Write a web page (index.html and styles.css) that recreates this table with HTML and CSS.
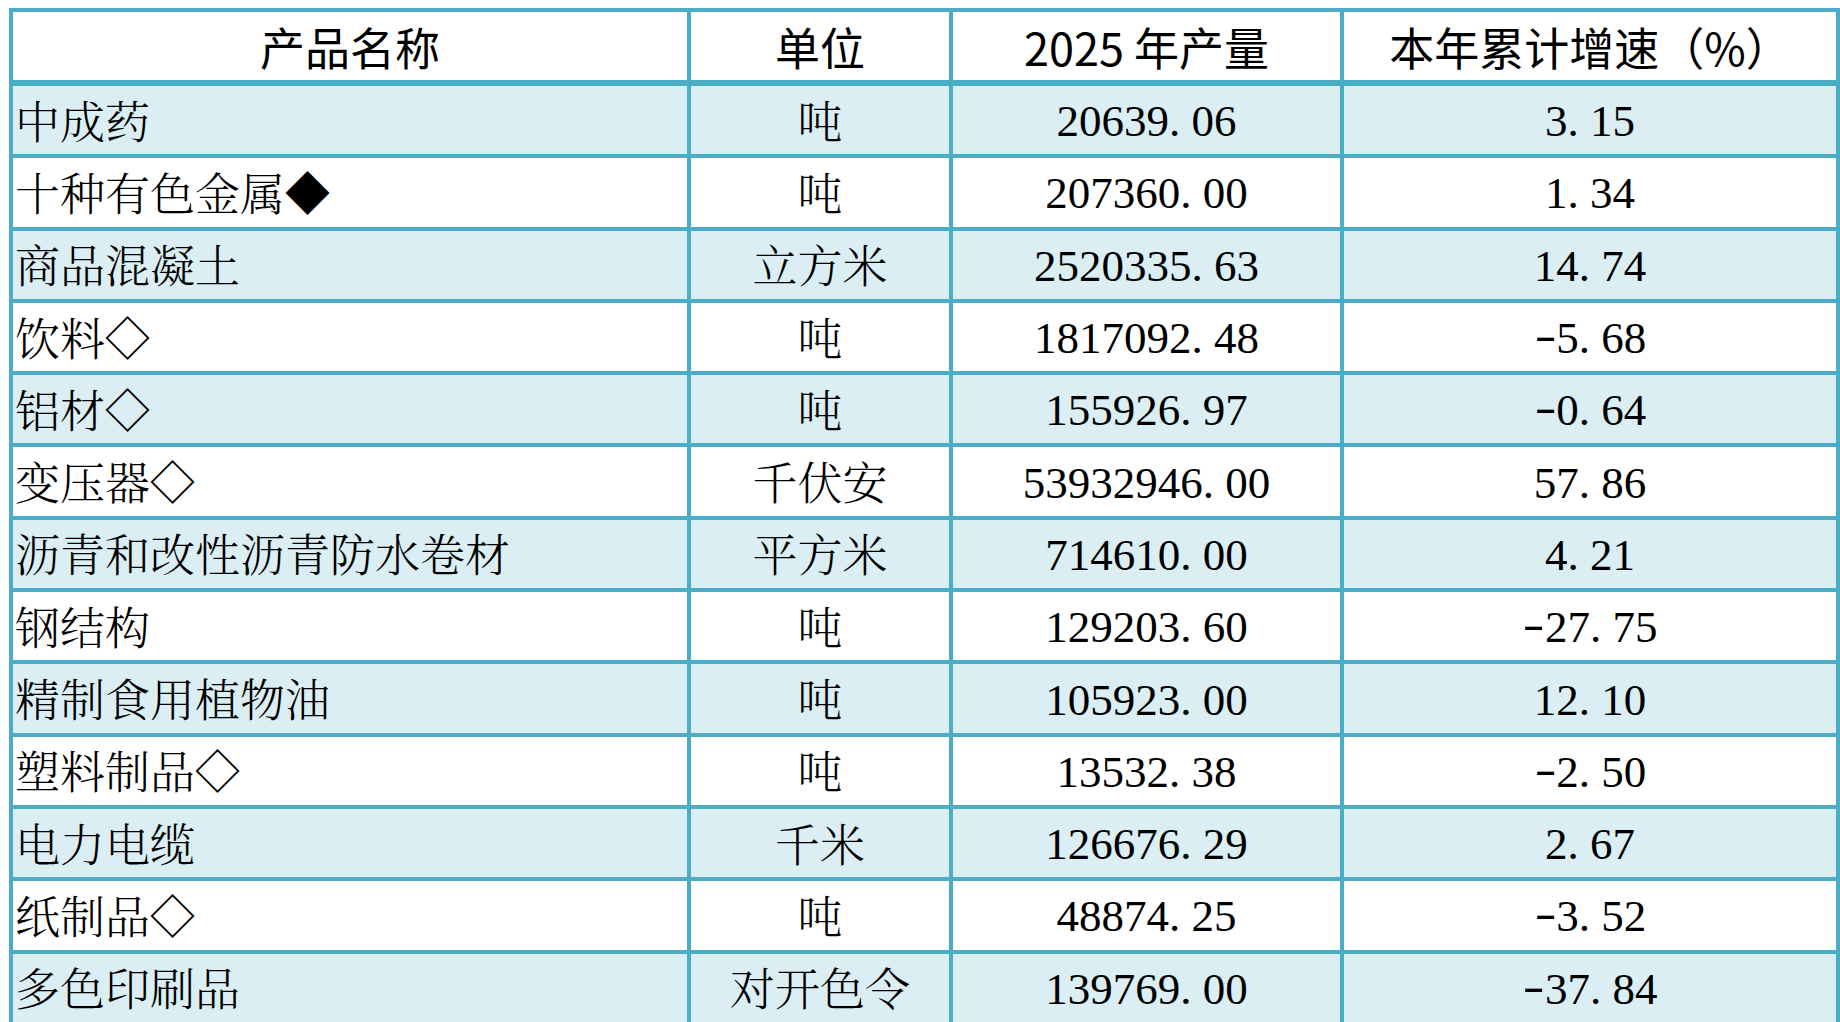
FILE: index.html
```html
<!DOCTYPE html>
<html lang="zh-CN">
<head>
<meta charset="utf-8">
<title>产品产量</title>
<link rel="stylesheet" href="styles.css">
</head>
<body>
<div class="sheet">
  <div class="grid">
    <div class="row head">
      <div class="cell name">产品名称</div>
      <div class="cell">单位</div>
      <div class="cell">2025 年产量</div>
      <div class="cell">本年累计增速（%）</div>
    </div>
    <div class="row alt">
      <div class="cell name">中成药</div>
      <div class="cell unit">吨</div>
      <div class="cell num">20639<span class="dot">.</span>06</div>
      <div class="cell num">3<span class="dot">.</span>15</div>
    </div>
    <div class="row">
      <div class="cell name">十种有色金属◆</div>
      <div class="cell unit">吨</div>
      <div class="cell num">207360<span class="dot">.</span>00</div>
      <div class="cell num">1<span class="dot">.</span>34</div>
    </div>
    <div class="row alt">
      <div class="cell name">商品混凝土</div>
      <div class="cell unit">立方米</div>
      <div class="cell num">2520335<span class="dot">.</span>63</div>
      <div class="cell num">14<span class="dot">.</span>74</div>
    </div>
    <div class="row">
      <div class="cell name">饮料◇</div>
      <div class="cell unit">吨</div>
      <div class="cell num">1817092<span class="dot">.</span>48</div>
      <div class="cell num"><span class="neg">-</span>5<span class="dot">.</span>68</div>
    </div>
    <div class="row alt">
      <div class="cell name">铝材◇</div>
      <div class="cell unit">吨</div>
      <div class="cell num">155926<span class="dot">.</span>97</div>
      <div class="cell num"><span class="neg">-</span>0<span class="dot">.</span>64</div>
    </div>
    <div class="row">
      <div class="cell name">变压器◇</div>
      <div class="cell unit">千伏安</div>
      <div class="cell num">53932946<span class="dot">.</span>00</div>
      <div class="cell num">57<span class="dot">.</span>86</div>
    </div>
    <div class="row alt">
      <div class="cell name">沥青和改性沥青防水卷材</div>
      <div class="cell unit">平方米</div>
      <div class="cell num">714610<span class="dot">.</span>00</div>
      <div class="cell num">4<span class="dot">.</span>21</div>
    </div>
    <div class="row">
      <div class="cell name">钢结构</div>
      <div class="cell unit">吨</div>
      <div class="cell num">129203<span class="dot">.</span>60</div>
      <div class="cell num"><span class="neg">-</span>27<span class="dot">.</span>75</div>
    </div>
    <div class="row alt">
      <div class="cell name">精制食用植物油</div>
      <div class="cell unit">吨</div>
      <div class="cell num">105923<span class="dot">.</span>00</div>
      <div class="cell num">12<span class="dot">.</span>10</div>
    </div>
    <div class="row">
      <div class="cell name">塑料制品◇</div>
      <div class="cell unit">吨</div>
      <div class="cell num">13532<span class="dot">.</span>38</div>
      <div class="cell num"><span class="neg">-</span>2<span class="dot">.</span>50</div>
    </div>
    <div class="row alt">
      <div class="cell name">电力电缆</div>
      <div class="cell unit">千米</div>
      <div class="cell num">126676<span class="dot">.</span>29</div>
      <div class="cell num">2<span class="dot">.</span>67</div>
    </div>
    <div class="row">
      <div class="cell name">纸制品◇</div>
      <div class="cell unit">吨</div>
      <div class="cell num">48874<span class="dot">.</span>25</div>
      <div class="cell num"><span class="neg">-</span>3<span class="dot">.</span>52</div>
    </div>
    <div class="row alt">
      <div class="cell name">多色印刷品</div>
      <div class="cell unit">对开色令</div>
      <div class="cell num">139769<span class="dot">.</span>00</div>
      <div class="cell num"><span class="neg">-</span>37<span class="dot">.</span>84</div>
    </div>
  </div>
</div>
</body>
</html>
```
FILE: styles.css
```css
html, body {
  margin: 0;
  padding: 0;
  background: #ffffff;
  overflow: hidden;
}

.sheet {
  padding: 8px 0 0 9px;
}

.grid {
  display: grid;
  grid-template-columns: 674px 258px 387px 492px;
  grid-template-rows: 70px;
  grid-auto-rows: 68.3px;
  gap: 4px;
  padding: 4px;
  background: #4bacc6;
  width: max-content;
}

.row {
  display: contents;
}

.cell {
  box-sizing: border-box;
  background: #ffffff;
  display: flex;
  align-items: center;
  justify-content: center;
  font-family: "Liberation Serif", "Noto Serif CJK SC", "Noto Sans CJK SC", serif;
  font-size: 45px;
  font-weight: 300;
  line-height: 1;
  color: #000000;
  white-space: nowrap;
  overflow: hidden;
}

.cell.name {
  justify-content: flex-start;
  padding: 8px 0 0 2px;
}

.cell.unit {
  padding-top: 8px;
}

.cell.num {
  padding-top: 3px;
}

.head .cell {
  font-family: "Noto Sans CJK SC", sans-serif;
  font-weight: 400;
  margin-bottom: 2px;
  padding-top: 0;
}

.head .cell.name {
  justify-content: center;
  padding-left: 0;
}

.alt .cell {
  background: #daeef3;
}

.dot {
  display: inline-block;
  width: 0.5em;
  text-align: left;
}

.neg {
  display: inline-block;
  margin: 0 0.083em;
  transform: translateY(-0.06em) scaleX(1.45);
}
```
